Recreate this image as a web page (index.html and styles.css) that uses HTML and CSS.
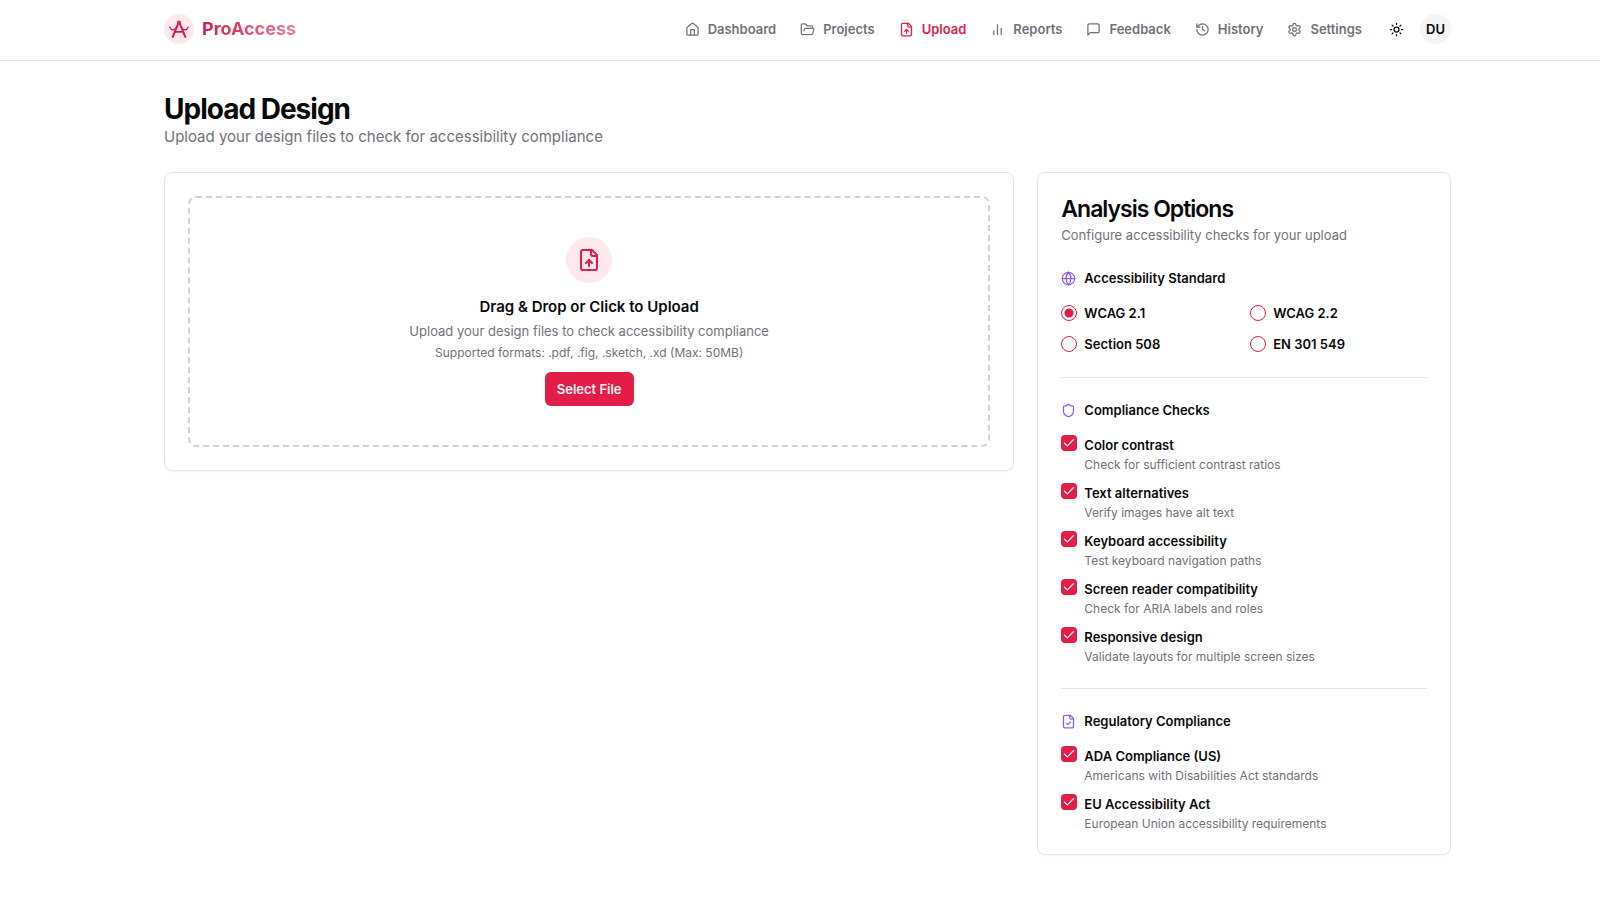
FILE: index.html
```html
<!DOCTYPE html>
<html lang="en">
<head>
    <meta charset="UTF-8">
    <meta name="viewport" content="width=device-width, initial-scale=1.0">
    <title>ProAccess - Upload Design</title>
    <link rel="stylesheet" href="styles.css">
</head>
<body>

    <header class="header">
        <a class="logo" href="#">
            <span class="logo-circle">
                <svg class="logo-icon" viewBox="0 0 24 24">
                    <path d="M4.500 21.500 11 5.500h2l6.500 16" stroke-width="2.400"/>
                    <path d="M7.500 15.500h9" stroke-width="2"/>
                    <path d="M1 9.500c1 3.500 3.500 4 5.500 3l2.500-2M23 9.500c-1 3.500-3.500 4-5.500 3l-2.500-2" stroke-width="1.500"/>
                    <circle cx="12" cy="4" r="1.500" stroke-width="1.500"/>
                </svg>
            </span>
            <span class="logo-text">ProAccess</span>
        </a>

        <nav class="nav">
            <a href="#">
                <svg class="icon" viewBox="0 0 24 24"><path d="M15 21v-8a1 1 0 0 0-1-1h-4a1 1 0 0 0-1 1v8"/><path d="M3 10a2 2 0 0 1 .709-1.528l7-5.999a2 2 0 0 1 2.582 0l7 5.999A2 2 0 0 1 21 10v9a2 2 0 0 1-2 2H5a2 2 0 0 1-2-2z"/></svg>
                Dashboard
            </a>
            <a href="#">
                <svg class="icon" viewBox="0 0 24 24"><path d="m6 14 1.500-2.900A2 2 0 0 1 9.240 10H20a2 2 0 0 1 1.940 2.500l-1.540 6a2 2 0 0 1-1.950 1.500H4a2 2 0 0 1-2-2V5a2 2 0 0 1 2-2h3.900a2 2 0 0 1 1.690.9l.81 1.200a2 2 0 0 0 1.670.9H18a2 2 0 0 1 2 2v2"/></svg>
                Projects
            </a>
            <a class="active" href="#">
                <svg class="icon" viewBox="0 0 24 24"><path d="M15 2H6a2 2 0 0 0-2 2v16a2 2 0 0 0 2 2h12a2 2 0 0 0 2-2V7Z"/><path d="M14 2v4a2 2 0 0 0 2 2h4"/><path d="M12 12v6"/><path d="m15 15-3-3-3 3"/></svg>
                Upload
            </a>
            <a href="#">
                <svg class="icon" viewBox="0 0 24 24"><path d="M18 20V10M12 20V4M6 20v-6"/></svg>
                Reports
            </a>
            <a href="#">
                <svg class="icon" viewBox="0 0 24 24"><path d="M21 15a2 2 0 0 1-2 2H7l-4 4V5a2 2 0 0 1 2-2h14a2 2 0 0 1 2 2z"/></svg>
                Feedback
            </a>
            <a href="#">
                <svg class="icon" viewBox="0 0 24 24"><path d="M3 12a9 9 0 1 0 9-9 9.750 9.750 0 0 0-6.740 2.740L3 8"/><path d="M3 3v5h5"/><path d="M12 7v5l4 2"/></svg>
                History
            </a>
            <a href="#">
                <svg class="icon" viewBox="0 0 24 24"><path d="M12.220 2h-.44a2 2 0 0 0-2 2v.18a2 2 0 0 1-1 1.730l-.43.25a2 2 0 0 1-2 0l-.15-.08a2 2 0 0 0-2.730.73l-.22.38a2 2 0 0 0 .73 2.730l.15.1a2 2 0 0 1 1 1.720v.51a2 2 0 0 1-1 1.740l-.15.09a2 2 0 0 0-.73 2.730l.22.38a2 2 0 0 0 2.730.73l.15-.08a2 2 0 0 1 2 0l.43.25a2 2 0 0 1 1 1.730V20a2 2 0 0 0 2 2h.44a2 2 0 0 0 2-2v-.18a2 2 0 0 1 1-1.730l.43-.25a2 2 0 0 1 2 0l.15.08a2 2 0 0 0 2.730-.73l.22-.39a2 2 0 0 0-.73-2.730l-.15-.08a2 2 0 0 1-1-1.740v-.5a2 2 0 0 1 1-1.740l.15-.09a2 2 0 0 0 .73-2.730l-.22-.38a2 2 0 0 0-2.730-.73l-.15.08a2 2 0 0 1-2 0l-.43-.25a2 2 0 0 1-1-1.730V4a2 2 0 0 0-2-2z"/><circle cx="12" cy="12" r="3"/></svg>
                Settings
            </a>
        </nav>

        <div class="actions">
            <button class="theme-btn" aria-label="Toggle theme">
                <svg class="icon" viewBox="0 0 24 24"><circle cx="12" cy="12" r="4"/><path d="M12 2v2M12 20v2M4.930 4.930l1.410 1.410M17.660 17.660l1.410 1.410M2 12h2M20 12h2M6.340 17.660l-1.410 1.410M19.070 4.930l-1.410 1.410"/></svg>
            </button>
            <button class="avatar">DU</button>
        </div>
    </header>

    <main class="main">
        <h1>Upload Design</h1>
        <p class="subtitle">Upload your design files to check for accessibility compliance</p>

        <div class="grid">
            <section class="card upload-card">
                <div class="dropzone">
                    <span class="upload-circle">
                        <svg class="icon icon-lg" viewBox="0 0 24 24"><path d="M15 2H6a2 2 0 0 0-2 2v16a2 2 0 0 0 2 2h12a2 2 0 0 0 2-2V7Z"/><path d="M14 2v4a2 2 0 0 0 2 2h4"/><path d="M12 12v6"/><path d="m15 15-3-3-3 3"/></svg>
                    </span>
                    <h3>Drag &amp; Drop or Click to Upload</h3>
                    <p class="drop-text">Upload your design files to check accessibility compliance</p>
                    <p class="formats">Supported formats: .pdf, .fig, .sketch, .xd (Max: 50MB)</p>
                    <button class="btn-primary">Select File</button>
                </div>
            </section>

            <section class="card options-card">
                <h2>Analysis Options</h2>
                <p class="card-desc">Configure accessibility checks for your upload</p>

                <div class="group">
                    <h4>
                        <svg class="icon" viewBox="0 0 24 24"><circle cx="12" cy="12" r="10"/><path d="M12 2a14.500 14.500 0 0 0 0 20 14.500 14.500 0 0 0 0-20"/><path d="M2 12h20"/></svg>
                        Accessibility Standard
                    </h4>
                    <div class="radios">
                        <label><input type="radio" name="standard" checked>WCAG 2.1</label>
                        <label><input type="radio" name="standard">WCAG 2.2</label>
                        <label><input type="radio" name="standard">Section 508</label>
                        <label><input type="radio" name="standard">EN 301 549</label>
                    </div>
                </div>

                <div class="group">
                    <h4>
                        <svg class="icon" viewBox="0 0 24 24"><path d="M20 13c0 5-3.500 7.500-7.660 8.950a1 1 0 0 1-.67-.01C7.500 20.500 4 18 4 13V6a1 1 0 0 1 1-1c2 0 4.500-1.200 6.240-2.720a1.170 1.170 0 0 1 1.520 0C14.510 3.810 17 5 19 5a1 1 0 0 1 1 1z"/></svg>
                        Compliance Checks
                    </h4>
                    <div class="checks">
                        <div class="check">
                            <input type="checkbox" id="contrast" checked>
                            <label for="contrast">Color contrast</label>
                            <p>Check for sufficient contrast ratios</p>
                        </div>
                        <div class="check">
                            <input type="checkbox" id="alt" checked>
                            <label for="alt">Text alternatives</label>
                            <p>Verify images have alt text</p>
                        </div>
                        <div class="check">
                            <input type="checkbox" id="keyboard" checked>
                            <label for="keyboard">Keyboard accessibility</label>
                            <p>Test keyboard navigation paths</p>
                        </div>
                        <div class="check">
                            <input type="checkbox" id="reader" checked>
                            <label for="reader">Screen reader compatibility</label>
                            <p>Check for ARIA labels and roles</p>
                        </div>
                        <div class="check">
                            <input type="checkbox" id="responsive" checked>
                            <label for="responsive">Responsive design</label>
                            <p>Validate layouts for multiple screen sizes</p>
                        </div>
                    </div>
                </div>

                <div class="group">
                    <h4>
                        <svg class="icon" viewBox="0 0 24 24"><path d="M15 2H6a2 2 0 0 0-2 2v16a2 2 0 0 0 2 2h12a2 2 0 0 0 2-2V7Z"/><path d="M14 2v4a2 2 0 0 0 2 2h4"/><path d="m9 15 2 2 4-4"/></svg>
                        Regulatory Compliance
                    </h4>
                    <div class="checks">
                        <div class="check">
                            <input type="checkbox" id="ada" checked>
                            <label for="ada">ADA Compliance (US)</label>
                            <p>Americans with Disabilities Act standards</p>
                        </div>
                        <div class="check">
                            <input type="checkbox" id="eu" checked>
                            <label for="eu">EU Accessibility Act</label>
                            <p>European Union accessibility requirements</p>
                        </div>
                    </div>
                </div>
            </section>
        </div>
    </main>

</body>
</html>
```

FILE: styles.css
```css
*{
    box-sizing: border-box;
    margin: 0;
    padding: 0;
}
body{
    font-family: Inter, "Liberation Sans", sans-serif;
    font-size: 13px;
    line-height: 20px;
    color: #09090b;
    background-color: #fff;
}
a{
    color: inherit;
    text-decoration: none;
}
button{
    font: inherit;
    border: 0;
    cursor: pointer;
}
.icon{
    width: 15px;
    height: 15px;
    flex: none;
    fill: none;
    stroke: currentColor;
    stroke-width: 2;
    stroke-linecap: round;
    stroke-linejoin: round;
}
.icon-lg{
    width: 24px;
    height: 24px;
}

/* header */
.header{
    display: flex;
    align-items: center;
    padding: 14px 149px 16px 164px;
    border-bottom: 1px solid #e4e4e7;
}
.logo{
    display: flex;
    align-items: center;
    gap: 8px;
    margin-right: auto;
}
.logo-circle{
    display: flex;
    align-items: center;
    justify-content: center;
    width: 30px;
    height: 30px;
    border-radius: 50%;
    background-color: #fce8ed;
}
.logo-icon{
    width: 20px;
    height: 20px;
    fill: none;
    stroke: #d81b4a;
    stroke-linecap: round;
    stroke-linejoin: round;
}
.logo-text{
    font-size: 18px;
    line-height: 24px;
    font-weight: 700;
    color: transparent;
    background: linear-gradient(to right, #d81b48, #ea7f98);
    -webkit-background-clip: text;
    background-clip: text;
}
.nav{
    display: flex;
    gap: 24px;
    font-weight: 600;
    color: #71717a;
}
.nav a{
    display: flex;
    align-items: center;
    gap: 8px;
}
.nav .active{
    color: #e11d48;
}
.actions{
    display: flex;
    align-items: center;
    gap: 16px;
    margin-left: 27px;
}
.theme-btn{
    display: flex;
    background: none;
    color: #09090b;
}
.avatar{
    width: 31px;
    height: 30px;
    border-radius: 50%;
    background-color: #f4f4f5;
    color: #09090b;
    font-weight: 600;
}

/* page */
.main{
    padding: 32px 149px 64px 164px;
}
h1{
    font-size: 28px;
    line-height: 32px;
    font-weight: 700;
    letter-spacing: -1px;
}
.subtitle{
    font-size: 15px;
    line-height: 24px;
    color: #71717a;
}
.grid{
    display: grid;
    grid-template-columns: repeat(3, 1fr);
    gap: 23px;
    align-items: start;
    margin-top: 23px;
}
.card{
    border: 1px solid #e4e4e7;
    border-radius: 8px;
    padding: 23px;
    box-shadow: 0 1px 2px rgba(0, 0, 0, 0.05);
}
.upload-card{
    grid-column: span 2;
}
.dropzone{
    display: flex;
    flex-direction: column;
    align-items: center;
    padding: 39px;
    border: 2px dashed #d2d2d5;
    border-radius: 8px;
    text-align: center;
}
.upload-circle{
    display: flex;
    align-items: center;
    justify-content: center;
    width: 46px;
    height: 46px;
    border-radius: 50%;
    background-color: #fce8ed;
    color: #e11d48;
}
.dropzone h3{
    margin-top: 12px;
    font-size: 15px;
    line-height: 24px;
    font-weight: 600;
}
.drop-text{
    margin-top: 2px;
    color: #71717a;
}
.formats{
    margin-top: 4px;
    font-size: 12px;
    line-height: 16px;
    color: #71717a;
}
.btn-primary{
    margin-top: 11px;
    height: 34px;
    padding: 0 12px;
    border-radius: 6px;
    background-color: #e11d48;
    color: #fff1f2;
    font-weight: 600;
}
.btn-primary:hover{
    background-color: #be123c;
}

/* options */
h2{
    font-size: 23px;
    line-height: 26px;
    font-weight: 600;
    letter-spacing: -1px;
}
.card-desc{
    margin-top: 3px;
    color: #71717a;
}
.options-card{
    padding-bottom: 22px;
}
.group{
    margin-top: 23px;
}
.group + .group{
    padding-top: 22px;
    border-top: 1px solid #e4e4e7;
}
h4{
    display: flex;
    align-items: center;
    gap: 8px;
    font-size: 13px;
    line-height: 20px;
    font-weight: 600;
}
h4 .icon{
    color: #8b5cf6;
}
.radios{
    display: grid;
    grid-template-columns: 1fr 1fr;
    gap: 11px 12px;
    margin-top: 15px;
}
.radios label{
    display: flex;
    align-items: center;
    gap: 7px;
    font-weight: 600;
}
input[type="radio"]{
    appearance: none;
    width: 16px;
    height: 16px;
    border: 1px solid #e11d48;
    border-radius: 50%;
}
input[type="radio"]:checked{
    background: radial-gradient(circle, #e11d48 4px, transparent 5px);
}
.checks{
    display: flex;
    flex-direction: column;
    gap: 10px;
    margin-top: 15px;
}
.check{
    display: grid;
    grid-template-columns: 16px 1fr;
    column-gap: 7px;
}
.check label{
    font-weight: 600;
}
.check p{
    grid-column: 2;
    margin-top: 2px;
    font-size: 12px;
    line-height: 16px;
    color: #71717a;
}
input[type="checkbox"]{
    appearance: none;
    width: 16px;
    height: 16px;
    border-radius: 4px;
    background: #e11d48;
}
input[type="checkbox"]:checked{
    background: #e11d48 url("data:image/svg+xml,%3Csvg xmlns='http://www.w3.org/2000/svg' viewBox='0 0 24 24' fill='none' stroke='white' stroke-width='2' stroke-linecap='round' stroke-linejoin='round'%3E%3Cpath d='M20 6 9 17l-5-5'/%3E%3C/svg%3E") center / 14px no-repeat;
}
```
